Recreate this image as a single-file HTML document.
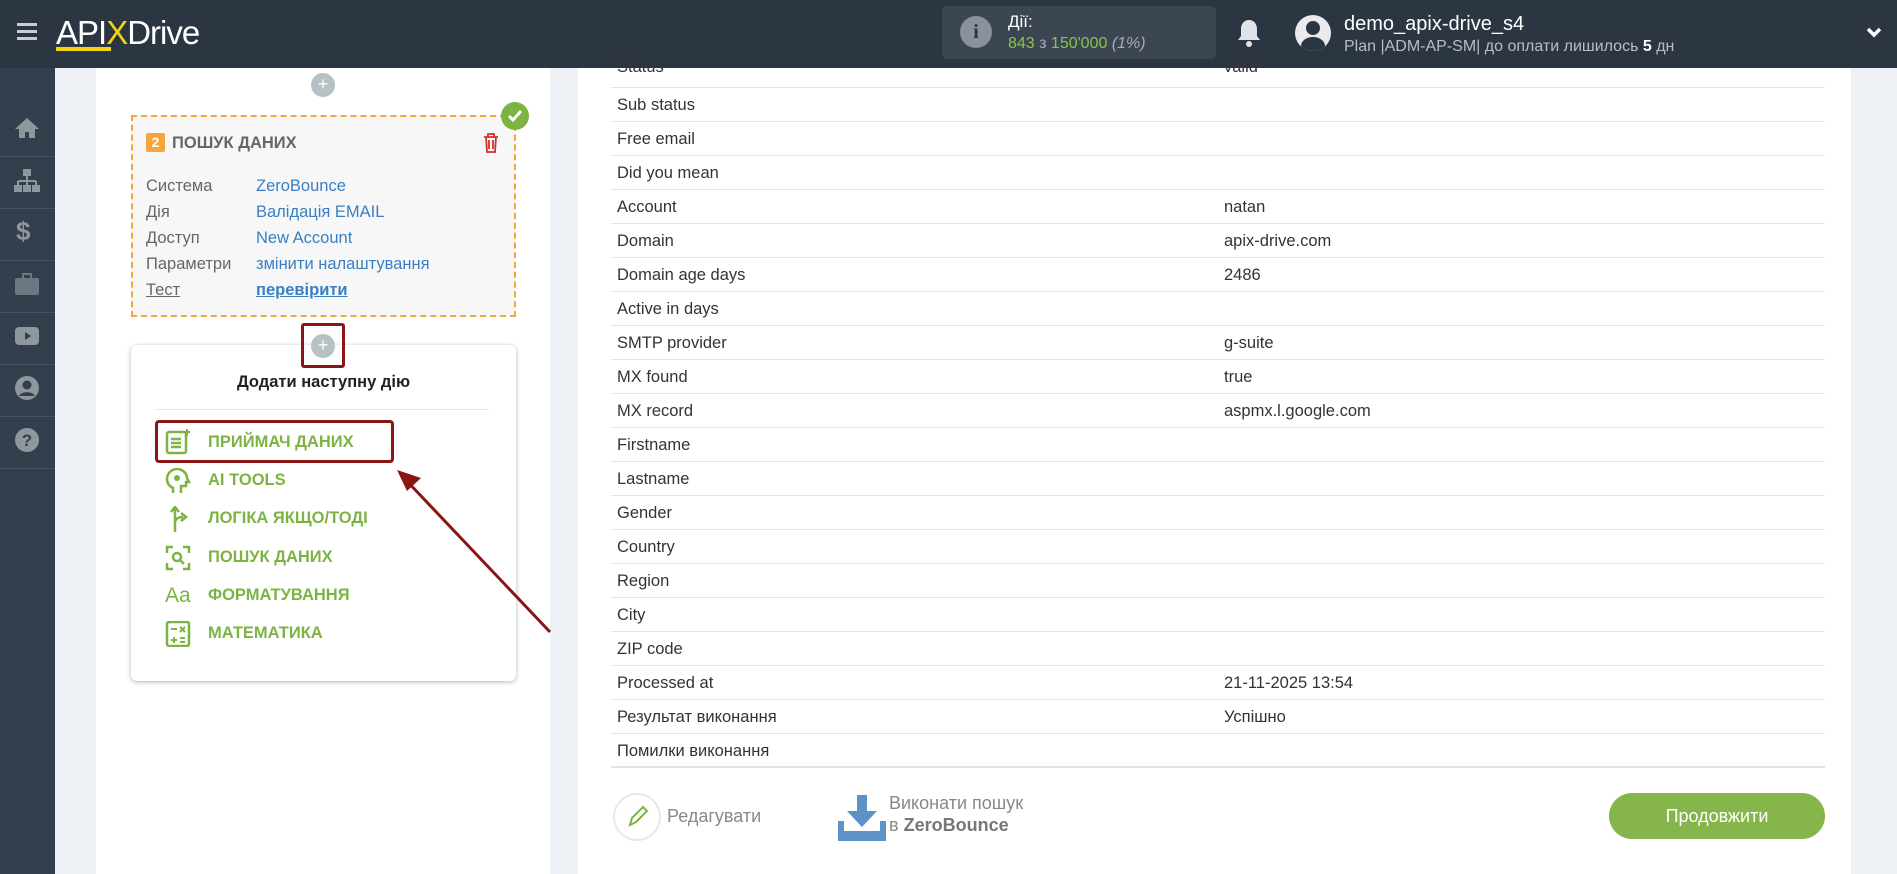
<!DOCTYPE html>
<html><head><meta charset="utf-8"><style>
*{margin:0;padding:0;box-sizing:border-box}
body{width:1897px;height:874px;overflow:hidden;background:#eef1f6;font-family:"Liberation Sans","DejaVu Sans",sans-serif;position:relative}
.abs{position:absolute}
#hdr{left:0;top:0;width:1897px;height:68px;background:#2c3643}
#side{left:0;top:68px;width:55px;height:806px;background:#343f4d}
.sep{position:absolute;left:0;width:55px;height:1px;background:#48535f}
.sico{position:absolute;left:14px;width:26px;height:26px}
#lp{left:96px;top:68px;width:454px;height:806px;background:#fff}
#rp{left:578px;top:68px;width:1273px;height:806px;background:#fff}
.plus{position:absolute;width:24px;height:24px;border-radius:50%;background:#b5c1c2;color:#fff;font-size:18px;line-height:23px;text-align:center}
.row{position:absolute;left:611px;width:1214px;height:34px;border-bottom:1px solid #e3e3e3;font-size:16.5px;color:#333;line-height:35px}
.row span{position:absolute;left:6px}
.row b{position:absolute;left:613px;font-weight:normal}
.lab{position:absolute;left:146px;font-size:16.5px;color:#666}
.val{position:absolute;left:256px;font-size:16.5px;color:#3a7fc1}
.it{position:absolute;left:208px;font-size:16.5px;font-weight:bold;color:#7cb342}
.ic{position:absolute;left:165px;width:26px;height:26px}
</style></head><body>
<div id="hdr" class="abs">
 <div class="abs" style="left:17px;top:23px;width:20px;height:3px;background:#c9ced4;box-shadow:0 7px 0 #c9ced4,0 14px 0 #c9ced4"></div>
 <div class="abs" style="left:56px;top:14px;font-size:33px;color:#fff;letter-spacing:-1px">API<span style="color:#f5d414">X</span>Drive</div>
 <div class="abs" style="left:56px;top:47px;width:55px;height:4px;background:#f5d414"></div>
 <div class="abs" style="left:942px;top:6px;width:274px;height:53px;background:#3b4652;border-radius:5px"></div>
 <div class="abs" style="left:960px;top:16px;width:32px;height:32px;border-radius:50%;background:#8a939c;color:#2c3643;text-align:center;font:bold 20px/32px 'Liberation Serif',serif">i</div>
 <div class="abs" style="left:1008px;top:12px;font-size:17px;color:#fff">Дії:</div>
 <div class="abs" style="left:1008px;top:35px;font-size:16px;color:#8bc34a">843 <span style="color:#aab">з</span> 150'000 <i style="color:#aab">(1%)</i></div>
 <svg class="abs" style="left:1237px;top:18px" width="24" height="30" viewBox="0 0 24 30"><path d="M12 2c-5 0-8 4-8 9v7l-3 4h22l-3-4v-7c0-5-3-9-8-9z" fill="#dfe3e7"/><circle cx="12" cy="26" r="3" fill="#dfe3e7"/></svg>
 <div class="abs" style="left:1295px;top:15px;width:36px;height:36px;border-radius:50%;background:#e8eaed;overflow:hidden"><div class="abs" style="left:11px;top:6px;width:14px;height:14px;border-radius:50%;background:#2c3643"></div><div class="abs" style="left:6px;top:22px;width:24px;height:18px;border-radius:50%;background:#2c3643"></div></div>
 <div class="abs" style="left:1344px;top:13px;font-size:20px;color:#fff">demo_apix-drive_s4</div>
 <div class="abs" style="left:1344px;top:38px;font-size:16px;color:#b6bec7">Plan |ADM-AP-SM| до оплати лишилось <b style="color:#fff">5</b> дн</div>
 <svg class="abs" style="left:1866px;top:27px" width="16" height="12" viewBox="0 0 16 12"><path d="M2 2l6 6 6-6" stroke="#fff" stroke-width="3.5" fill="none"/></svg>
</div>
<div id="side" class="abs">
 <div class="sep" style="top:88px"></div><div class="sep" style="top:140px"></div><div class="sep" style="top:192px"></div><div class="sep" style="top:244px"></div><div class="sep" style="top:296px"></div><div class="sep" style="top:348px"></div><div class="sep" style="top:400px"></div>
 <svg class="sico" style="top:47px" viewBox="0 0 26 26"><path d="M13 3L1 14h4v9h6v-6h4v6h6v-9h4z" fill="#8e969e"/></svg>
 <svg class="sico" style="top:99px" viewBox="0 0 26 26"><rect x="9" y="2" width="8" height="7" fill="#8e969e"/><path d="M13 9v5M4 14h18M4 14v4M13 14v4M22 14v4" stroke="#8e969e" stroke-width="2" fill="none"/><rect x="0" y="18" width="8" height="7" fill="#8e969e"/><rect x="9" y="18" width="8" height="7" fill="#8e969e"/><rect x="18" y="18" width="8" height="7" fill="#8e969e"/></svg>
 <div class="abs" style="left:16px;top:148px;font-size:26px;font-weight:bold;color:#8e969e">$</div>
 <svg class="sico" style="top:203px" viewBox="0 0 26 26"><rect x="1" y="7" width="24" height="17" rx="2" fill="#6d7781"/><rect x="9" y="3" width="8" height="5" fill="none" stroke="#6d7781" stroke-width="2"/></svg>
 <svg class="sico" style="top:255px" viewBox="0 0 26 26"><rect x="1" y="4" width="24" height="18" rx="4" fill="#8e969e"/><path d="M11 9l6 4-6 4z" fill="#343f4d"/></svg>
 <svg class="sico" style="top:307px" viewBox="0 0 26 26"><circle cx="13" cy="13" r="12" fill="#8e969e"/><circle cx="13" cy="10" r="4.5" fill="#343f4d"/><path d="M5 21c2-5 14-5 16 0" fill="#343f4d"/></svg>
 <svg class="sico" style="top:359px" viewBox="0 0 26 26"><circle cx="13" cy="13" r="12" fill="#8e969e"/><text x="13" y="19" text-anchor="middle" font-size="17" font-weight="bold" fill="#343f4d" font-family="Liberation Sans">?</text></svg>
</div>
<div id="lp" class="abs"></div>
<div id="rp" class="abs"></div>
<div class="plus" style="left:311px;top:73px">+</div>
<div class="abs" style="left:131px;top:115px;width:385px;height:202px;background:#f7f7f7;border:2px dashed #f5a53a"></div>
<div class="abs" style="left:501px;top:102px;width:28px;height:28px;border-radius:50%;background:#7cb342"><svg width="28" height="28"><path d="M8 14l4 4 8-9" stroke="#fff" stroke-width="3" fill="none"/></svg></div>
<div class="abs" style="left:146px;top:133px;width:19px;height:19px;background:#f5a53a;color:#fff;font-size:14px;font-weight:bold;text-align:center;line-height:19px;border-radius:2px">2</div>
<div class="abs" style="left:172px;top:134px;font-size:16.5px;font-weight:bold;color:#666">ПОШУК ДАНИХ</div>
<svg class="abs" style="left:483px;top:133px" width="16" height="20" viewBox="0 0 16 20"><path d="M1 4h14M5 4V1h6v3M3 4l1 15h8l1-15M6 7v9M10 7v9" stroke="#d32f2f" stroke-width="1.8" fill="none"/></svg>
<div class="lab" style="top:177px">Система</div><div class="val" style="top:177px">ZeroBounce</div>
<div class="lab" style="top:203px">Дія</div><div class="val" style="top:203px">Валідація EMAIL</div>
<div class="lab" style="top:229px">Доступ</div><div class="val" style="top:229px">New Account</div>
<div class="lab" style="top:255px">Параметри</div><div class="val" style="top:255px">змінити налаштування</div>
<div class="lab" style="top:281px;text-decoration:underline">Тест</div><div class="val" style="top:281px;font-weight:bold;text-decoration:underline">перевірити</div>
<div class="abs" style="left:131px;top:345px;width:385px;height:336px;background:#fff;border-radius:6px;box-shadow:0 1px 5px rgba(0,0,0,.3)"></div>
<div class="plus" style="left:311px;top:334px">+</div>
<div class="abs" style="left:301px;top:323px;width:44px;height:45px;border:3px solid #8b1414;border-radius:3px"></div>
<div class="abs" style="left:131px;top:373px;width:385px;text-align:center;font-size:16.5px;font-weight:bold;color:#222">Додати наступну дію</div>
<div class="abs" style="left:155px;top:409px;width:334px;height:1px;background:#e5e5e5"></div>
<div class="abs" style="left:155px;top:420px;width:239px;height:43px;border:3px solid #8b1414;border-radius:4px"></div>
<svg class="ic" style="top:429px" viewBox="0 0 26 26"><rect x="2" y="3" width="19" height="21" rx="2" fill="none" stroke="#7cb342" stroke-width="2.5"/><path d="M6 10h10M6 14h10M6 18h10" stroke="#7cb342" stroke-width="2.5"/><path d="M22 0v7M19 3h6" stroke="#7cb342" stroke-width="2"/></svg>
<div class="it" style="top:433px">ПРИЙМАЧ ДАНИХ</div>
<svg class="ic" style="top:468px" viewBox="0 0 26 26"><path d="M8 25v-5c-4-2-6-5-6-9 0-6 5-10 10-10s10 4 10 9l2 4h-3v4h-5v7" fill="none" stroke="#7cb342" stroke-width="2.5"/><circle cx="12" cy="10" r="3" fill="#7cb342"/></svg>
<div class="it" style="top:471px">AI TOOLS</div>
<svg class="ic" style="top:506px" viewBox="0 0 26 26"><path d="M10 26V2M6 6l4-5 4 5M10 17c0-4 3-6 8-6M16 7l5 4-5 4" fill="none" stroke="#7cb342" stroke-width="2.5"/></svg>
<div class="it" style="top:509px">ЛОГІКА ЯКЩО/ТОДІ</div>
<svg class="ic" style="top:545px" viewBox="0 0 26 26"><path d="M2 8V2h6M18 2h6v6M24 18v6h-6M8 24H2v-6" fill="none" stroke="#7cb342" stroke-width="2.5"/><circle cx="12" cy="12" r="4" fill="none" stroke="#7cb342" stroke-width="2.5"/><path d="M15 15l4 4" stroke="#7cb342" stroke-width="2.5"/></svg>
<div class="it" style="top:548px">ПОШУК ДАНИХ</div>
<div class="abs" style="left:165px;top:584px;font-size:21px;color:#7cb342">Aa</div>
<div class="it" style="top:586px">ФОРМАТУВАННЯ</div>
<svg class="ic" style="top:621px" viewBox="0 0 26 26"><rect x="2" y="1" width="22" height="24" rx="2" fill="none" stroke="#7cb342" stroke-width="2.5"/><path d="M6 8h6M9 16v6M6 19h6M15 6l5 5M20 6l-5 5M15 17h5M15 21h5" stroke="#7cb342" stroke-width="2"/></svg>
<div class="it" style="top:624px">МАТЕМАТИКА</div>
<svg class="abs" style="left:380px;top:460px" width="180" height="180"><line x1="170" y1="172" x2="24" y2="18" stroke="#8b1414" stroke-width="3"/><path d="M17 10l24 8-14 13z" fill="#8b1414"/></svg>
<div class="row" style="top:55px;height:33px"><span style="top:-5px">Status</span><b style="top:-5px">valid</b></div>
<div class="row" style="top:88px"><span>Sub status</span></div>
<div class="row" style="top:122px"><span>Free email</span></div>
<div class="row" style="top:156px"><span>Did you mean</span></div>
<div class="row" style="top:190px"><span>Account</span><b>natan</b></div>
<div class="row" style="top:224px"><span>Domain</span><b>apix-drive.com</b></div>
<div class="row" style="top:258px"><span>Domain age days</span><b>2486</b></div>
<div class="row" style="top:292px"><span>Active in days</span></div>
<div class="row" style="top:326px"><span>SMTP provider</span><b>g-suite</b></div>
<div class="row" style="top:360px"><span>MX found</span><b>true</b></div>
<div class="row" style="top:394px"><span>MX record</span><b>aspmx.l.google.com</b></div>
<div class="row" style="top:428px"><span>Firstname</span></div>
<div class="row" style="top:462px"><span>Lastname</span></div>
<div class="row" style="top:496px"><span>Gender</span></div>
<div class="row" style="top:530px"><span>Country</span></div>
<div class="row" style="top:564px"><span>Region</span></div>
<div class="row" style="top:598px"><span>City</span></div>
<div class="row" style="top:632px"><span>ZIP code</span></div>
<div class="row" style="top:666px"><span>Processed at</span><b>21-11-2025 13:54</b></div>
<div class="row" style="top:700px"><span>Результат виконання</span><b>Успішно</b></div>
<div class="row" style="top:734px;border-bottom:2px solid #e3e3e3"><span>Помилки виконання</span></div>
<div class="abs" style="left:613px;top:793px;width:48px;height:48px;border-radius:50%;border:2px solid #e3ece3"><svg width="44" height="44"><path d="M15 30l2-7 11-11 4 4-11 11z" fill="none" stroke="#7cb342" stroke-width="2"/></svg></div>
<div class="abs" style="left:667px;top:806px;font-size:18px;color:#888">Редагувати</div>
<svg class="abs" style="left:838px;top:795px" width="50" height="46" viewBox="0 0 50 46"><rect x="19" y="0" width="10" height="18" fill="#5b93c7"/><path d="M9 16h30L24 32z" fill="#5b93c7"/><path d="M0 26h6v12h36V26h6v20H0z" fill="#5b93c7"/><rect x="0" y="36" width="48" height="10" fill="#5b93c7"/></svg>
<div class="abs" style="left:889px;top:793px;font-size:18px;color:#888">Виконати пошук</div>
<div class="abs" style="left:889px;top:815px;font-size:18px;color:#888">в <b style="color:#777">ZeroBounce</b></div>
<div class="abs" style="left:1609px;top:793px;width:216px;height:46px;border-radius:23px;background:#86b54c;color:#fff;font-size:18px;text-align:center;line-height:46px">Продовжити</div>
</body></html>
